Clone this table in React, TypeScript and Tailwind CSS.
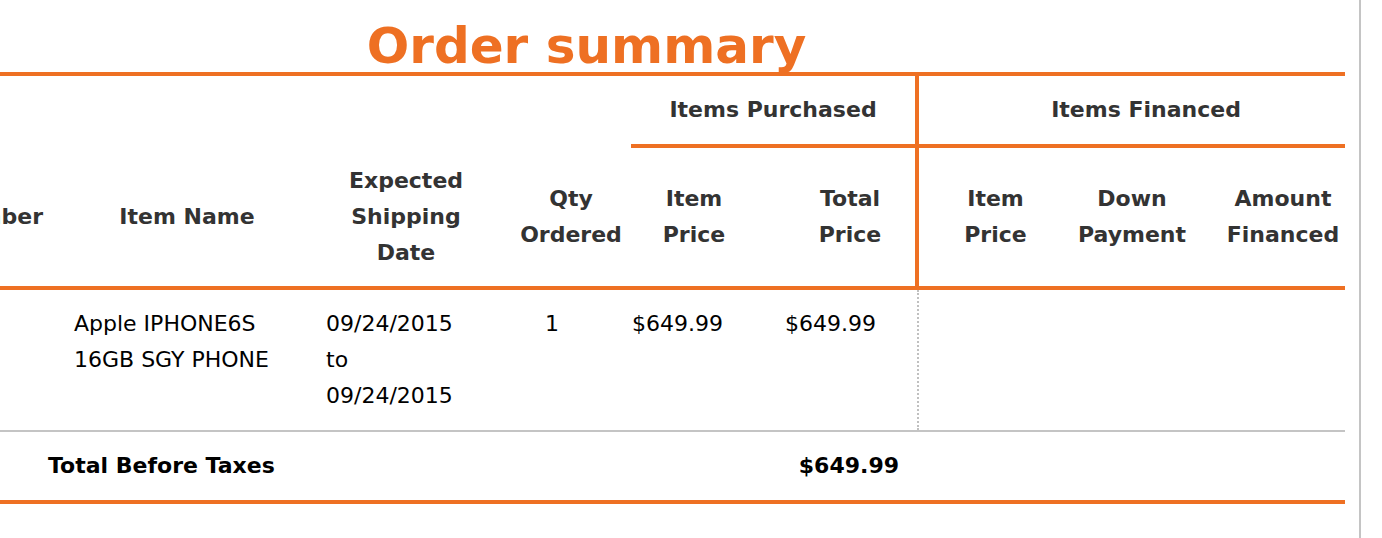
import React from 'react'

const ORANGE = 'bg-[#ee7023]'

function HeadCell({ w, className = '', children }: { w: string; className?: string; children?: React.ReactNode }) {
  return (
    <div className={`${w} flex items-center justify-center text-center ${className}`}>
      <div>{children}</div>
    </div>
  )
}

export default function App() {
  return (
    <div className="flex h-[538px] w-full bg-white font-['DejaVu_Sans','Verdana',sans-serif] text-[22px] leading-[36px]">
      <div className="w-[1359px] shrink-0 overflow-hidden">
        {/* title */}
        <div className="h-[72px] w-[1173px] pt-[21px] text-center text-[50px] leading-none font-bold text-[#ee7023]">
          Order summary
        </div>

        <div className="ml-[-200px] w-[1545px]">
          <div className={`h-[4px] ${ORANGE}`} />

          {/* header */}
          <div className="flex h-[210px] font-bold text-[#333]">
            <div className="flex w-[831px] pt-[72px]">
              <div className="flex h-[138px] w-[260px] items-center justify-end pr-[17px]">Item Number</div>
              <HeadCell w="w-[254px] h-[138px]">Item Name</HeadCell>
              <HeadCell w="w-[184px] h-[138px]">Expected<br />Shipping<br />Date</HeadCell>
              <HeadCell w="w-[133px] h-[138px]" className="pl-[13px]">Qty<br />Ordered</HeadCell>
            </div>

            <div className="flex w-[284px] flex-col">
              <div className="flex h-[68px] items-center justify-center">Items Purchased</div>
              <div className={`h-[4px] ${ORANGE}`} />
              <div className="flex h-[138px]">
                <HeadCell w="w-[154px]" className="pr-[28px]">Item<br />Price</HeadCell>
                <HeadCell w="w-[130px]">Total<br />Price</HeadCell>
              </div>
            </div>

            <div className={`w-[4px] ${ORANGE}`} />

            <div className="flex w-[426px] flex-col">
              <div className="flex h-[68px] items-center justify-center pl-[28px]">Items Financed</div>
              <div className={`h-[4px] ${ORANGE}`} />
              <div className="flex h-[138px]">
                <HeadCell w="w-[153px]">Item<br />Price</HeadCell>
                <HeadCell w="w-[120px]">Down<br />Payment</HeadCell>
                <HeadCell w="w-[153px]" className="pl-[29px]">Amount<br />Financed</HeadCell>
              </div>
            </div>
          </div>

          <div className={`h-[4px] ${ORANGE}`} />

          {/* item row */}
          <div className="flex h-[140px] text-black">
            <div className="w-[260px]" />
            <div className="w-[254px] pt-[16px] pl-[14px]">
              <div>Apple IPHONE6S</div>
              <div>16GB SGY PHONE</div>
            </div>
            <div className="w-[184px] pt-[16px] pl-[12px]">
              <div>09/24/2015</div>
              <div>to</div>
              <div>09/24/2015</div>
            </div>
            <div className="w-[133px] pt-[16px] pl-[47px]">1</div>
            <div className="w-[154px] pt-[16px] pl-[1px]">$649.99</div>
            <div className="w-[132px] pt-[16px]">$649.99</div>
            <div className="w-[2px] border-l-2 border-dotted border-[#c0c0c0]" />
            <div className="w-[426px]" />
          </div>

          <div className="h-[2px] bg-[#c4c4c4]" />

          {/* total row */}
          <div className="flex h-[68px] items-center font-bold text-black">
            <div className="w-[985px] pl-[248px]">Total Before Taxes</div>
            <div className="w-[132px] pr-[18px] text-right">$649.99</div>
          </div>

          <div className={`h-[4px] ${ORANGE}`} />
        </div>
      </div>
      <div className="w-[2px] shrink-0 bg-[#c4c4c4]" />
      <div className="flex-1" />
    </div>
  )
}
